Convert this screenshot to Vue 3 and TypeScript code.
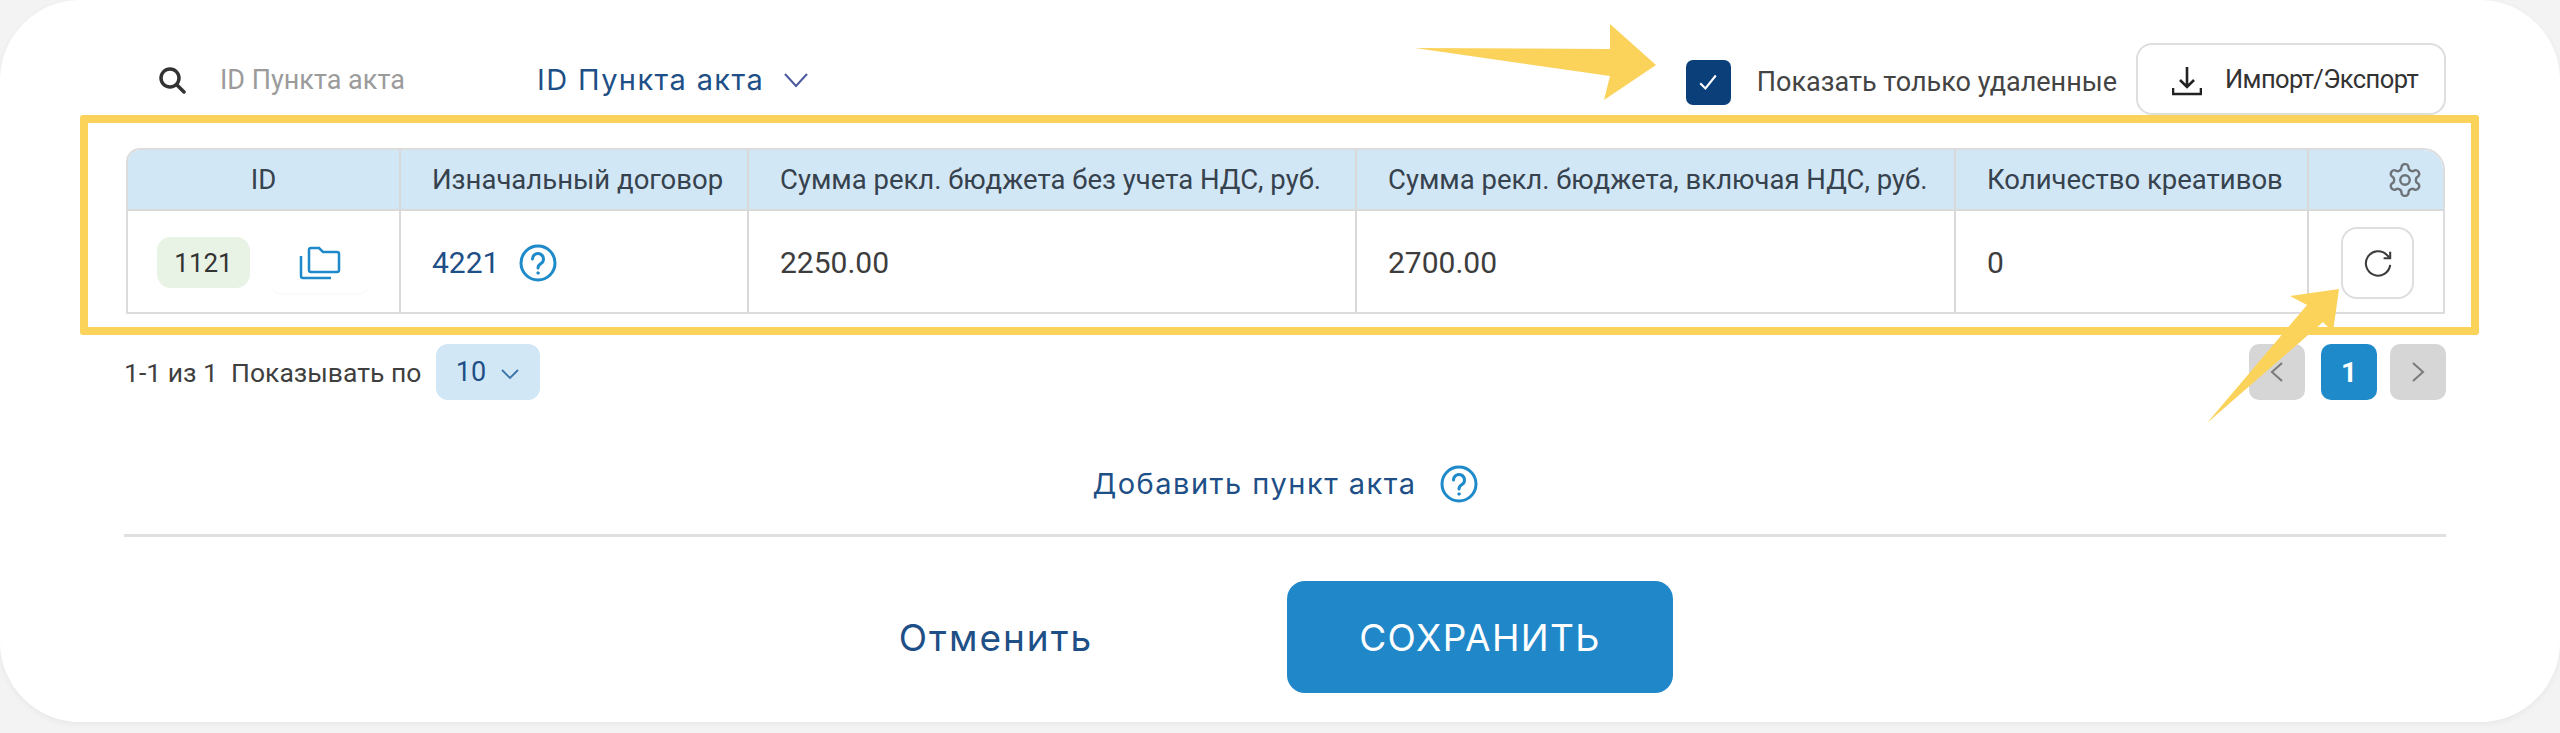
<script setup lang="ts">
const columns = [
  { title: 'Изначальный договор' },
  { title: 'Сумма рекл. бюджета без учета НДС, руб.' },
  { title: 'Сумма рекл. бюджета, включая НДС, руб.' },
  { title: 'Количество креативов' },
]
</script>

<template>
  <div class="page">
    <section class="card">
      <header class="toolbar">
        <svg class="search-icon" viewBox="0 0 28 28" fill="none">
          <circle cx="12" cy="12" r="9" />
          <path d="M19 19l7 7" />
        </svg>
        <span class="placeholder">ID Пункта акта</span>
        <button class="filter-select">
          ID Пункта акта
          <svg viewBox="0 0 26 16" fill="none"><path d="M2 2l11 12L24 2" /></svg>
        </button>
        <span class="spacer"></span>
        <span class="checkbox">
          <svg viewBox="0 0 20 20" fill="none"><path d="M4 11l4 4 8-10" /></svg>
        </span>
        <span class="check-label">Показать только удаленные</span>
        <button class="import-btn">
          <svg viewBox="0 0 30 30" fill="none">
            <path d="M15 1v19M8 14l7 7 7-7" />
            <path d="M1 22v6h28v-6" />
          </svg>
          Импорт/Экспорт
        </button>
      </header>

      <div class="table">
        <div class="th th-id">ID</div>
        <div v-for="col in columns" :key="col.title" class="th">{{ col.title }}</div>
        <div class="th th-gear">
          <svg viewBox="0 0 24 24" fill="none">
            <path d="M12.22 2h-.44a2 2 0 0 0-2 2v.18a2 2 0 0 1-1 1.73l-.43.25a2 2 0 0 1-2 0l-.15-.08a2 2 0 0 0-2.73.73l-.22.38a2 2 0 0 0 .73 2.73l.15.1a2 2 0 0 1 1 1.72v.51a2 2 0 0 1-1 1.74l-.15.09a2 2 0 0 0-.73 2.73l.22.38a2 2 0 0 0 2.73.73l.15-.08a2 2 0 0 1 2 0l.43.25a2 2 0 0 1 1 1.73V20a2 2 0 0 0 2 2h.44a2 2 0 0 0 2-2v-.18a2 2 0 0 1 1-1.73l.43-.25a2 2 0 0 1 2 0l.15.08a2 2 0 0 0 2.73-.73l.22-.39a2 2 0 0 0-.73-2.73l-.15-.08a2 2 0 0 1-1-1.74v-.5a2 2 0 0 1 1-1.74l.15-.09a2 2 0 0 0 .73-2.73l-.22-.38a2 2 0 0 0-2.73-.73l-.15.08a2 2 0 0 1-2 0l-.43-.25a2 2 0 0 1-1-1.73V4a2 2 0 0 0-2-2z" />
            <circle cx="12" cy="12" r="3" />
          </svg>
        </div>

        <div class="td td-id">
          <span class="id-pill">1121</span>
          <span class="folder-wrap">
            <svg viewBox="0 0 42 34" fill="none">
              <path d="M10 24V4a2 2 0 0 1 2-2h8l4 4h14a2 2 0 0 1 2 2v16a2 2 0 0 1-2 2H12a2 2 0 0 1-2-2z" />
              <path d="M2 10v20a2 2 0 0 0 2 2h28" />
            </svg>
          </span>
        </div>
        <div class="td td-link">
          <span class="link">4221</span>
          <svg class="help" viewBox="0 0 38 38" fill="none">
            <circle cx="19" cy="19" r="17" />
            <path d="M13.5 15a5.5 5.5 0 1 1 8.5 4.6c-2 1.3-3 2.4-3 4.4" />
            <circle class="dot" cx="19" cy="29" r="1.2" />
          </svg>
        </div>
        <div class="td">2250.00</div>
        <div class="td">2700.00</div>
        <div class="td">0</div>
        <div class="td td-action">
          <button class="restore-btn">
            <svg viewBox="0 0 32 32" fill="none">
              <path d="M29 18a13 13 0 1 1-3.5-10.5L29 11" />
              <path d="M29 4v7h-7" />
            </svg>
          </button>
        </div>
      </div>

      <div class="pager-row">
        <span class="range">1-1 из 1&nbsp; Показывать по</span>
        <button class="page-size">
          10
          <svg viewBox="0 0 20 12" fill="none"><path d="M2 2l8 8 8-8" /></svg>
        </button>
        <span class="spacer"></span>
        <button class="page-btn">
          <svg viewBox="0 0 14 22" fill="none"><path d="M12 2L2 11l10 9" /></svg>
        </button>
        <button class="page-btn active">1</button>
        <button class="page-btn">
          <svg viewBox="0 0 14 22" fill="none"><path d="M2 2l10 9-10 9" /></svg>
        </button>
      </div>

      <div class="add-row">
        <span>Добавить пункт акта</span>
        <svg class="help" viewBox="0 0 38 38" fill="none">
          <circle cx="19" cy="19" r="17" />
          <path d="M13.5 15a5.5 5.5 0 1 1 8.5 4.6c-2 1.3-3 2.4-3 4.4" />
          <circle class="dot" cx="19" cy="29" r="1.2" />
        </svg>
      </div>

      <div class="actions">
        <button class="cancel">Отменить</button>
        <button class="save">СОХРАНИТЬ</button>
      </div>

      <div class="annotation-frame"></div>
      <svg class="annotation-arrows" viewBox="0 0 2560 733">
        <polygon points="1415,48 1610,49 1610,24 1656,65 1604,100 1610,76" />
        <polygon points="2207,423 2307,305 2290,296 2339,289 2333,332 2323,322" />
      </svg>
    </section>
  </div>
</template>

<style>
html,
body {
  margin: 0;
  background: #f3f3f3;
}
</style>

<style scoped>
.page {
  height: 733px;
  overflow: hidden;
  font-family: Roboto, "Liberation Sans", sans-serif;
  color: #3a3a3a;
}
button {
  font-family: inherit;
  background: none;
  border: 0;
  padding: 0;
  color: inherit;
}
.card {
  position: relative;
  height: 722px;
  box-sizing: border-box;
  padding: 43px 114px 0 124px;
  background: #fff;
  border-radius: 80px;
  box-shadow: 0 2px 6px rgba(0, 0, 0, 0.05);
}
.toolbar {
  display: flex;
  align-items: center;
  height: 72px;
  padding-left: 34px;
}
.search-icon {
  width: 28px;
  height: 28px;
  margin-top: 2px;
  stroke: #333;
  stroke-width: 3.5;
  stroke-linecap: round;
}
.placeholder {
  margin-left: 34px;
  width: 317px;
  margin-top: 1px;
  font-size: 27px;
  color: #9b9b9b;
}
.filter-select {
  display: flex;
  align-items: center;
  gap: 19px;
  margin-top: 1px;
  font-family: Inter, sans-serif;
  font-size: 29px;
  letter-spacing: 1.4px;
  color: #1e4f86;
}
.filter-select svg {
  width: 26px;
  height: 16px;
  stroke: #4a5a9c;
  stroke-width: 2;
}
.spacer {
  flex: 1;
}
.checkbox {
  display: flex;
  align-items: center;
  justify-content: center;
  width: 45px;
  height: 45px;
  margin-top: 6px;
  border-radius: 7px;
  background: #0b3f7a;
}
.checkbox svg {
  width: 26px;
  height: 26px;
  stroke: #fff;
  stroke-width: 1.6;
}
.check-label {
  margin-left: 26px;
  margin-right: 19px;
  margin-top: 6px;
  font-size: 27px;
  color: #444;
}
.import-btn {
  display: flex;
  align-items: center;
  gap: 23px;
  box-sizing: border-box;
  width: 310px;
  height: 72px;
  padding-left: 34px;
  border: 2px solid #dedede;
  border-radius: 16px;
  font-size: 25.5px;
  letter-spacing: -0.6px;
  color: #333;
}
.import-btn svg {
  width: 30px;
  height: 30px;
  margin-top: 4px;
  stroke: #222;
  stroke-width: 2.6;
}
.table {
  display: grid;
  grid-template-columns: 273px 348px 608px 599px 353px 134px;
  grid-template-rows: 61px 101px;
  box-sizing: border-box;
  margin: 33px 1px 0 2px;
  height: 166px;
  border: 2px solid #dcdcdc;
  border-top-left-radius: 14px;
  border-top-right-radius: 22px;
  overflow: hidden;
}
.th,
.td {
  display: flex;
  align-items: center;
  box-sizing: border-box;
  border-right: 2px solid #d9d9d9;
  padding-left: 31px;
  white-space: nowrap;
}
.th {
  background: #d2e7f5;
  border-bottom: 2px solid #d9d9d9;
  font-size: 27.5px;
  color: #36424e;
}
.th:nth-child(6),
.td:last-child {
  border-right: 0;
}
.th-id {
  justify-content: center;
  padding-left: 0;
}
.th-gear {
  justify-content: flex-end;
  padding: 0 19px 0 0;
}
.th-gear svg {
  width: 38px;
  height: 38px;
  stroke: #6d7378;
  stroke-width: 1.5;
}
.td {
  padding-top: 2px;
  font-size: 30px;
  color: #3d3d3d;
}
.td-id {
  padding-left: 29px;
}
.id-pill {
  display: flex;
  align-items: center;
  justify-content: center;
  width: 93px;
  height: 51px;
  border-radius: 14px;
  background: #e8f3e5;
  font-size: 26px;
  color: #333;
}
.folder-wrap {
  display: flex;
  align-items: center;
  justify-content: center;
  width: 98px;
  height: 56px;
  margin-left: 21px;
  margin-top: 5px;
  border-radius: 10px;
  box-shadow: 0 2px 2px rgba(0, 0, 0, 0.025);
}
.folder-wrap svg {
  width: 42px;
  height: 34px;
  margin-top: -5px;
  stroke: #1f8aca;
  stroke-width: 2.5;
}
.td-link {
  gap: 20px;
}
.link {
  color: #1e4f86;
}
.help {
  width: 38px;
  height: 38px;
  stroke: #1f8aca;
  stroke-width: 3;
  stroke-linecap: round;
}
.help .dot {
  fill: #1f8aca;
  stroke-width: 1;
}
.td-action {
  padding-left: 32px;
}
.restore-btn {
  display: flex;
  align-items: center;
  justify-content: center;
  box-sizing: border-box;
  width: 73px;
  height: 72px;
  border: 2px solid #dedede;
  border-radius: 16px;
}
.restore-btn svg {
  width: 30px;
  height: 30px;
  stroke: #3c3c3c;
  stroke-width: 2.2;
}
.pager-row {
  display: flex;
  align-items: center;
  height: 56px;
  margin-top: 30px;
}
.range {
  width: 296px;
  font-size: 26.5px;
  white-space: nowrap;
  color: #3f3f3f;
}
.page-size {
  display: flex;
  align-items: center;
  justify-content: center;
  gap: 14px;
  width: 104px;
  height: 56px;
  margin-left: 16px;
  border-radius: 12px;
  background: #d2e7f5;
  font-size: 27px;
  color: #1e4f86;
}
.page-size svg {
  width: 20px;
  height: 12px;
  margin-top: 3px;
  stroke: #3b74a8;
  stroke-width: 1.8;
}
.page-btn {
  display: flex;
  align-items: center;
  justify-content: center;
  width: 56px;
  height: 56px;
  margin-left: 16px;
  border-radius: 10px;
  background: #d6d6d6;
}
.page-btn:nth-last-child(1) {
  margin-left: 13px;
}
.page-btn svg {
  width: 14px;
  height: 22px;
  stroke: #7a7a7a;
  stroke-width: 2;
}
.page-btn.active {
  background: #1f8aca;
  color: #fff;
  font-size: 28px;
  font-weight: 700;
}
.add-row {
  display: flex;
  align-items: center;
  justify-content: center;
  gap: 23px;
  box-sizing: border-box;
  height: 137px;
  padding-top: 33px;
  border-bottom: 3px solid #e0e0e0;
  font-family: Inter, sans-serif;
  font-size: 29px;
  letter-spacing: 1.5px;
  color: #1e4f86;
}
.actions {
  display: flex;
  align-items: center;
  height: 112px;
  margin-top: 44px;
  padding-left: 773px;
}
.cancel {
  width: 198px;
  font-family: Inter, sans-serif;
  font-size: 37px;
  letter-spacing: 2px;
  color: #1e4f86;
  white-space: nowrap;
}
.save {
  width: 386px;
  height: 112px;
  margin-left: 192px;
  border-radius: 18px;
  background: #2088c9;
  font-family: Inter, sans-serif;
  font-size: 37px;
  letter-spacing: 1.4px;
  color: #fff;
}
.annotation-frame {
  position: absolute;
  left: 80px;
  top: 115px;
  box-sizing: border-box;
  width: 2399px;
  height: 220px;
  border: 8px solid #fbd35a;
  border-radius: 3px;
  pointer-events: none;
}
.annotation-arrows {
  position: absolute;
  left: 0;
  top: 0;
  width: 2560px;
  height: 733px;
  fill: #fbd35a;
  pointer-events: none;
}
</style>
